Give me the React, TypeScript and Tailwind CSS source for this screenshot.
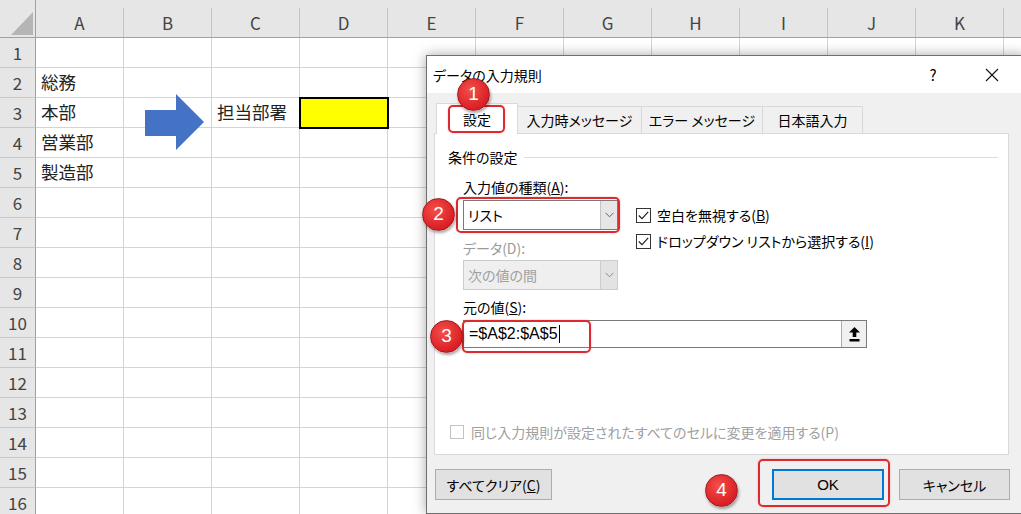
import React from 'react';

const cols = ['A', 'B', 'C', 'D', 'E', 'F', 'G', 'H', 'I', 'J', 'K', ''];
const rows = Array.from({ length: 16 }, (_, i) => i + 1);

const cellText: Record<string, string> = {
  A2: '総務',
  A3: '本部',
  A4: '営業部',
  A5: '製造部',
  C3: '担当部署',
};

function Badge({ n, className }: { n: number; className: string }) {
  return (
    <div
      className={`absolute z-20 w-[33px] h-[33px] rounded-full border border-[#a3161a] bg-[radial-gradient(circle_at_40%_35%,#f4504a,#d91f25_70%)] shadow-[1px_2px_3px_rgba(0,0,0,0.35)] flex items-center justify-center text-white text-[19px] font-['Liberation_Sans',sans-serif] ${className}`}
    >
      {n}
    </div>
  );
}

function Mark({ className }: { className: string }) {
  return <div className={`absolute z-20 rounded-[5px] border-2 border-[#dc2a2e] shadow-[0_0_2px_rgba(200,0,0,0.3)] ${className}`} />;
}

function Chevron({ color = '#606060' }: { color?: string }) {
  return (
    <svg width="9" height="6" viewBox="0 0 9 6">
      <polyline points="0.5,0.8 4.5,4.8 8.5,0.8" fill="none" stroke={color} strokeWidth="1" />
    </svg>
  );
}

function Check() {
  return (
    <div className="w-[15px] h-[15px] border border-[#333] bg-white flex items-center justify-center">
      <svg width="11" height="9" viewBox="0 0 11 9">
        <polyline points="0.8,4.5 4,7.6 10.2,0.8" fill="none" stroke="#222" strokeWidth="1.2" />
      </svg>
    </div>
  );
}

function Sheet() {
  return (
    <div className="grid grid-cols-[36px_repeat(12,88px)] grid-rows-[38px_repeat(16,30px)] font-['Noto_Sans_CJK_JP',sans-serif]">
      {/* corner */}
      <div className="bg-[#e6e6e6] border-r border-b border-[#a0a0a0] relative">
        <svg className="absolute left-[11px] top-[12px]" width="23" height="24" viewBox="0 0 23 24">
          <polygon points="0,23 22,23 22,0" fill="#b5b5b5" />
        </svg>
      </div>
      {cols.map((c, i) => (
        <div key={i} className="flex flex-col bg-[#e6e6e6] border-b border-[#a0a0a0]">
          <div className="h-2" />
          <div className="flex-1 border-r border-[#c4c4c4] flex items-center justify-center text-[17px] text-[#444]">{c}</div>
        </div>
      ))}
      {rows.map((r) => (
        <React.Fragment key={r}>
          <div className="bg-[#e6e6e6] border-r border-[#9e9e9e] border-b border-b-[#c8c8c8] flex items-center justify-center text-[17px] text-[#444]">
            {r}
          </div>
          {cols.map((c, i) => {
            const id = `${c}${r}`;
            if (id === 'D3') {
              return (
                <div key={i} className="relative z-10 bg-[#ffff00] outline-2 outline-black outline-offset-[-1px] border-r border-b border-[#d4d4d4]" />
              );
            }
            return (
              <div key={i} className="border-r border-b border-[#d4d4d4] flex items-center pl-[5px] text-[17.5px] text-[#222] whitespace-nowrap overflow-hidden">
                {c ? cellText[id] ?? '' : ''}
              </div>
            );
          })}
        </React.Fragment>
      ))}
    </div>
  );
}

function Dialog() {
  return (
    <div className="absolute left-[426px] top-[55px] w-[600px] h-[459px] border border-[#6f6f6f] bg-[#f0f0f0] flex flex-col shadow-[0_0_12px_rgba(0,0,0,0.35)] text-[14px] leading-[20px] text-black font-['Noto_Sans_CJK_JP',sans-serif] [font-feature-settings:'palt']">
      {/* title bar */}
      <div className="h-[37px] bg-white flex items-center">
        <span className="pl-[6px]">データの入力規則</span>
        <span className="ml-auto w-[20px] text-center text-[15px]">?</span>
        <svg className="ml-[42px] mr-[26px]" width="14" height="14" viewBox="0 0 14 14">
          <path d="M1 1 L13 13 M13 1 L1 13" stroke="#111" strokeWidth="1.1" />
        </svg>
      </div>

      {/* tabs */}
      <div className="mt-[10px] ml-[9px] flex items-end h-[30px]">
        <div className="relative z-10 h-[31px] -mb-px w-[82px] bg-white border border-b-0 border-[#d9d9d9] flex items-center justify-center">設定</div>
        <div className="h-[27px] w-[124px] bg-[#f0f0f0] border-t border-r border-[#d9d9d9] flex items-center justify-center">入力時メッセージ</div>
        <div className="h-[27px] w-[121px] bg-[#f0f0f0] border-t border-r border-[#d9d9d9] flex items-center justify-center">エラー メッセージ</div>
        <div className="h-[27px] w-[100px] bg-[#f0f0f0] border-t border-r border-[#d9d9d9] flex items-center justify-center">日本語入力</div>
      </div>

      {/* panel */}
      <div className="ml-[7px] w-[575px] h-[322px] bg-white border border-[#d9d9d9] flex flex-col">
        <div className="mt-[13px] ml-[13px] mr-[10px] flex items-center h-[20px]">
          <span>条件の設定</span>
          <div className="flex-1 ml-[6px] border-t border-[#dcdcdc]" />
        </div>

        <div className="flex ml-[28px] mt-[10px]">
          <div className="w-[155px] flex flex-col">
            <div className="h-[20px]">
              入力値の種類(<span className="underline">A</span>):
            </div>
            <div className="mt-[3px] h-[30px] flex border border-[#7a7a7a] bg-white">
              <div className="flex-1 flex items-center pl-[4px]">リスト</div>
              <div className="w-[17px] bg-[#e6e6e6] border-l border-[#c4c4c4] flex items-center justify-center">
                <Chevron />
              </div>
            </div>
            <div className="mt-[8px] h-[20px] text-[#9a9a9a]">データ(D):</div>
            <div className="mt-[2px] h-[30px] flex border border-[#cccccc] bg-[#efefef]">
              <div className="flex-1 flex items-center pl-[4px] text-[#a0a0a0]">次の値の間</div>
              <div className="w-[17px] bg-[#e3e3e3] border-l border-[#cccccc] flex items-center justify-center">
                <Chevron color="#8a8a8a" />
              </div>
            </div>
          </div>
          <div className="ml-[18px] pt-[28px] flex flex-col gap-[6px]">
            <div className="h-[20px] flex items-center gap-[6px]">
              <Check />
              <span>
                空白を無視する(<span className="underline">B</span>)
              </span>
            </div>
            <div className="h-[20px] flex items-center gap-[6px]">
              <Check />
              <span>
                ドロップダウン リストから選択する(<span className="underline">I</span>)
              </span>
            </div>
          </div>
        </div>

        <div className="ml-[28px] mt-[7px] h-[20px]">
          元の値(<span className="underline">S</span>):
        </div>
        <div className="ml-[28px] mt-[3px] w-[404px] h-[28px] flex border border-[#7a7a7a] bg-white">
          <div className="flex-1 flex items-center pl-[5px] font-['Liberation_Sans',sans-serif] text-[16px]">
            =$A$2:$A$5
            <span className="ml-[1px] w-px h-[18px] bg-black" />
          </div>
          <div className="w-[25px] border-l border-[#adadad] bg-[#f0f0f0] flex items-center justify-center">
            <svg width="11" height="15" viewBox="0 0 11 15">
              <polygon points="5.5,0 11,5.5 7.3,5.5 7.3,10 3.7,10 3.7,5.5 0,5.5" fill="#000" />
              <rect x="0.5" y="12" width="10" height="2.5" fill="#000" />
            </svg>
          </div>
        </div>

        <div className="ml-[15px] mt-[74px] h-[20px] flex items-center gap-[7px] text-[#a0a0a0]">
          <div className="w-[14px] h-[14px] border border-[#c4c4c4] bg-white" />
          <span>同じ入力規則が設定されたすべてのセルに変更を適用する(P)</span>
        </div>
      </div>

      {/* buttons */}
      <div className="mt-[14px] ml-[8px] mr-[15px] flex">
        <div className="w-[117px] h-[31px] bg-[#e1e1e1] border border-[#adadad] flex items-center justify-center">
          すべてクリア(<span className="underline">C</span>)
        </div>
        <div className="ml-auto w-[112px] h-[31px] bg-[#e1e1e1] border-2 border-[#0078d7] flex items-center justify-center font-['Liberation_Sans',sans-serif] text-[15px]">
          OK
        </div>
        <div className="ml-[15px] w-[111px] h-[31px] bg-[#e1e1e1] border border-[#adadad] flex items-center justify-center">キャンセル</div>
      </div>
    </div>
  );
}

export default function App() {
  return (
    <div className="relative w-[1021px] h-[514px] overflow-hidden bg-white">
      <Sheet />

      {/* blue arrow shape */}
      <svg className="absolute left-[145px] top-[94px]" width="60" height="57" viewBox="0 0 60 57">
        <polygon points="0,16 31,16 31,0 59,28 31,56 31,42 0,42" fill="#4472c4" />
      </svg>

      <Dialog />

      {/* annotations */}
      <Mark className="left-[448px] top-[105px] w-[57px] h-[28px]" />
      <Mark className="left-[456px] top-[197px] w-[164px] h-[36px]" />
      <Mark className="left-[462px] top-[320px] w-[129px] h-[33px]" />
      <Mark className="left-[758px] top-[459px] w-[132px] h-[48px]" />
      <Badge n={1} className="left-[457px] top-[78px]" />
      <Badge n={2} className="left-[422px] top-[198px]" />
      <Badge n={3} className="left-[430px] top-[320px]" />
      <Badge n={4} className="left-[705px] top-[474px]" />
    </div>
  );
}
